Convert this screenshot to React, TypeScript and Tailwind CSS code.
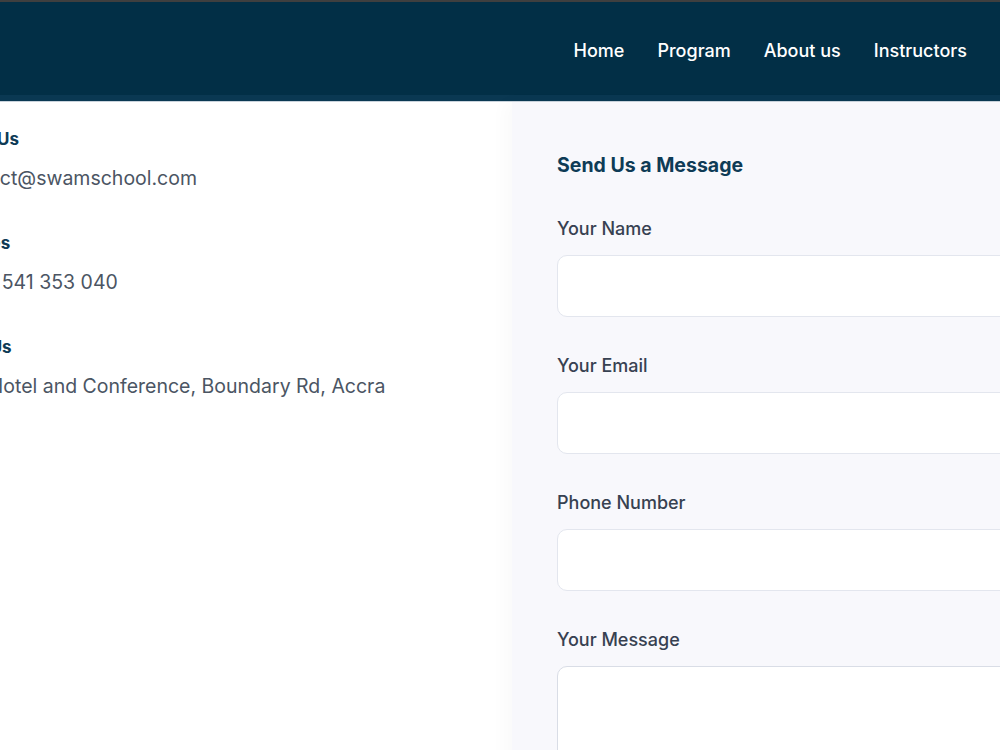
import React from 'react';

const font = { fontFamily: 'Inter, "Noto Sans", sans-serif' };

const contacts = [
  { title: 'Email Us', value: 'contact@swamschool.com' },
  { title: 'Phones', value: '+233 541 353 040' },
  { title: 'Visit Us', value: 'Ash Hotel and Conference, Boundary Rd, Accra' },
];

const fields = ['Your Name', 'Your Email', 'Phone Number'];

export default function App() {
  return (
    <div className="h-[750px] w-[1000px] overflow-hidden bg-white" style={font}>
      <header className="border-t-2 border-[#3f3f3f] bg-[#022f46]">
        <nav className="flex h-[93px] items-center justify-end gap-[33px] pt-1 pr-[33px]">
          <a className="text-[18px] font-medium text-white">Home</a>
          <a className="text-[18px] font-medium text-white">Program</a>
          <a className="text-[18px] font-medium text-white">About us</a>
          <a className="text-[18px] font-medium text-white">Instructors</a>
        </nav>
        <div className="h-[6px] bg-[#0a3852]" />
        <div className="h-px bg-[#c9d3dc]" />
      </header>

      <div className="flex">
        <section className="w-[512px] shrink-0 pt-[25px]">
          <div className="-ml-[52px] flex flex-col gap-[39px]">
            {contacts.map((c) => (
              <div key={c.title} className="flex flex-col gap-[13px]">
                <h3 className="text-[17px] leading-6 font-bold whitespace-nowrap text-[#0e3b56]">{c.title}</h3>
                <p className="text-[19.5px] leading-7 whitespace-nowrap text-[#4b5563]">{c.value}</p>
              </div>
            ))}
          </div>
        </section>

        <section className="h-[700px] flex-1 bg-[#f8f8fc] pt-[49px] pl-[45px] shadow-[-8px_0_16px_rgba(0,0,0,0.025)]">
          <h2 className="mb-[38px] text-[19.5px] leading-7 font-bold text-[#0e3b56]">Send Us a Message</h2>
          <form className="flex w-[520px] flex-col gap-[37px]">
            {fields.map((f) => (
              <label key={f} className="flex flex-col gap-[14px]">
                <span className="text-[18px] leading-6 font-medium text-[#374151]">{f}</span>
                <input className="h-[62px] rounded-[10px] border border-[#e3e6ee] bg-white px-4" />
              </label>
            ))}
            <label className="flex flex-col gap-[14px]">
              <span className="text-[18px] leading-6 font-medium text-[#374151]">Your Message</span>
              <textarea className="h-[160px] rounded-[10px] border border-[#d9dde6] bg-white px-4" />
            </label>
          </form>
        </section>
      </div>
    </div>
  );
}
